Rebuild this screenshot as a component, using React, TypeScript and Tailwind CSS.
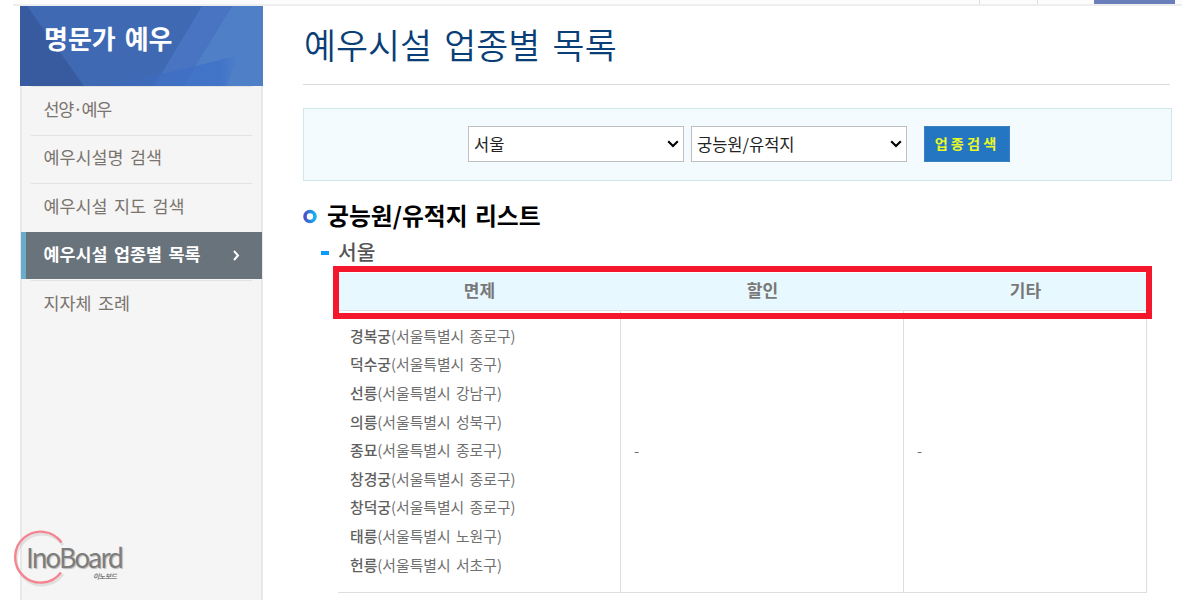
import clsx from 'clsx';

const MENU_ITEMS = [
  { label: '선양·예우', active: false, class_name: 'tracking-[-1.3px]' },
  { label: '예우시설명 검색', active: false },
  { label: '예우시설 지도 검색', active: false },
  { label: '예우시설 업종별 목록', active: true },
  { label: '지자체 조례', active: false }
];

const PLACES = [
  { name: '경복궁', address: '서울특별시 종로구' },
  { name: '덕수궁', address: '서울특별시 중구' },
  { name: '선릉', address: '서울특별시 강남구' },
  { name: '의릉', address: '서울특별시 성북구' },
  { name: '종묘', address: '서울특별시 종로구' },
  { name: '창경궁', address: '서울특별시 종로구' },
  { name: '창덕궁', address: '서울특별시 종로구' },
  { name: '태릉', address: '서울특별시 노원구' },
  { name: '헌릉', address: '서울특별시 서초구' }
];

function TopBar() {
  return (
    <div className="mr-[18px] ml-[13px] flex h-[6px] justify-end border-b-2 border-[#eeeeee] bg-[#fcfcfc]">
      <div className="w-[58px] border-l border-[#dddddd]" />
      <div className="w-[57px] border-l border-[#dddddd]" />
      <div className="mr-[7px] w-[81px] bg-[#6a7ebc]" />
    </div>
  );
}

function SidebarTitle() {
  return (
    <div className="relative h-20 overflow-hidden bg-[#4069b3]">
      <svg className="absolute inset-0" width="243" height="80" viewBox="0 0 243 80">
        <defs>
          <linearGradient id="wave" x1="0" y1="0" x2="1" y2="0">
            <stop offset="0" stopColor="#3966b8" stopOpacity="0.3" />
            <stop offset="0.7" stopColor="#3d6fc7" />
            <stop offset="0.88" stopColor="#3d70c8" />
            <stop offset="1" stopColor="#4d80c9" />
          </linearGradient>
        </defs>
        <path d="M0 0H7L64 80H0Z" fill="#385b9f" />
        <path d="M182 0H212L163 80H134Z" fill="#4874c1" />
        <path d="M212 0H243V80H163Z" fill="#4e7fc7" />
        <path d="M72 80Q130 73 218 49L207 80Z" fill="url(#wave)" opacity="0.75" />
      </svg>
      <h2 className="relative pt-[13px] pl-6 text-[26px] leading-[38px] font-bold text-white [word-spacing:3px]">
        명문가 예우
      </h2>
    </div>
  );
}

function Sidebar() {
  return (
    <aside className="ml-5 flex w-[243px] shrink-0 flex-col bg-[#f5f5f5]">
      <SidebarTitle />
      <ul className="flex-1 border-x-2 border-[#e8e8e8] text-[17.4px] [word-spacing:2.5px]">
        {MENU_ITEMS.map((item) => (
          <li key={item.label} className={clsx('h-[48.5px]', item.class_name)}>
            {item.active ? (
              <a className="-mx-px flex h-[47px] items-center justify-between border-l-[5px] border-[#6aaccb] bg-[#69737c] pr-[22px] pb-[2px] pl-[17.5px] font-bold text-white">
                {item.label}
                <svg className="mt-[2px]" width="7" height="11" viewBox="0 0 7 11" fill="none" stroke="white" strokeWidth="2">
                  <path d="M1 1L5 5.5L1 10" />
                </svg>
              </a>
            ) : (
              <a className="mx-[9px] flex h-full items-center border-t border-[#e2e2e2] pb-[4px] pl-[12.6px] text-[#7a746e]">
                {item.label}
              </a>
            )}
          </li>
        ))}
      </ul>
    </aside>
  );
}

function Select({ value, class_name }: { value: string; class_name?: string }) {
  return (
    <div className={clsx('relative h-9', class_name)}>
      <select className="h-full w-full appearance-none border border-[#bfbfbf] bg-white pt-[2px] pl-[5px] text-[16.5px] text-[#222222]">
        <option>{value}</option>
      </select>
      <svg
        className="pointer-events-none absolute top-[14px] right-[5px]"
        width="12"
        height="8"
        viewBox="0 0 12 8"
        fill="none"
        stroke="black"
        strokeWidth="2.1"
      >
        <path d="M1.2 1.2L6 6L10.8 1.2" />
      </svg>
    </div>
  );
}

function SearchBox() {
  return (
    <div className="mt-[23px] flex h-[73px] w-[869px] items-center border border-[#cfe9ea] bg-[#f3fbfe] pb-[2px] pl-[164px]">
      <Select value="서울" class_name="w-[216px]" />
      <Select value="궁능원/유적지" class_name="ml-[7px] w-[216px]" />
      <button className="ml-[17px] h-9 w-[86px] border border-[#3c80c0] bg-[#2476c3] text-[14.2px] font-bold tracking-[3.1px] text-[#e9f928]">
        업종검색
      </button>
    </div>
  );
}

function FacilityTable() {
  return (
    <div className="relative mt-[7px] ml-[35px] w-[809px]">
      <table className="w-full table-fixed border-separate border-spacing-0">
        <colgroup>
          <col className="w-[283px]" />
          <col className="w-[283px]" />
          <col className="w-[243px]" />
        </colgroup>
        <thead>
          <tr className="h-[38px] bg-[#e8f8ff] text-[17px] text-[#787878]">
            <th className="border-b border-[#d9e2e6] pb-[4px] font-bold">면제</th>
            <th className="border-b border-[#d9e2e6] pb-[4px] font-bold">할인</th>
            <th className="border-b border-[#d9e2e6] pb-[4px] font-bold">기타</th>
          </tr>
        </thead>
        <tbody>
          <tr className="h-[282px] text-[14.85px] text-[#707070]">
            <td className="border-r border-b border-[#dedede] pb-[2px] pl-3">
              <ul className="leading-[28.65px] [word-spacing:2px]">
                {PLACES.map((place) => (
                  <li key={place.name}>
                    <strong className="font-medium text-[#606060]">{place.name}</strong>({place.address})
                  </li>
                ))}
              </ul>
            </td>
            <td className="border-r border-b border-[#dedede] pl-[13px]">-</td>
            <td className="border-r border-b border-[#dedede] pl-[13px]">-</td>
          </tr>
        </tbody>
      </table>
      <div className="absolute -top-[7px] -left-[5px] h-[53px] w-[819px] border-[6px] border-[#f5182d]" />
    </div>
  );
}

function Watermark() {
  return (
    <div className="absolute top-[528px] left-[10px] h-16 w-32 text-[#7d7d7d]">
      <svg className="absolute inset-0" width="128" height="64" fill="none">
        <path d="M53 17A25.5 25.5 0 1 0 53 46" stroke="#bbbbbb" strokeOpacity="0.35" strokeWidth="3" />
        <path d="M51.5 14.5A25.5 25.5 0 1 0 51 44.5" stroke="#f58491" strokeWidth="2.4" />
      </svg>
      <div className="relative flex w-[98px] flex-col pt-[18px] pl-4">
        <span className="text-[26.5px] leading-[22px] tracking-[-2.3px] [text-shadow:1px_1px_1px_#bbbbbb]">
          InoBoard
        </span>
        <span className="mt-[4px] ml-[67px] text-[7px] leading-[8px] font-bold tracking-[-0.6px] whitespace-nowrap italic">
          이노보드
        </span>
      </div>
    </div>
  );
}

function App() {
  return (
    <div className="relative flex h-[600px] w-[1200px] flex-col overflow-hidden bg-white font-['Noto_Sans_CJK_KR',sans-serif]">
      <TopBar />
      <div className="flex flex-1">
        <Sidebar />
        <main className="ml-10 w-[868px]">
          <h1 className="h-[79px] w-[867px] border-b border-[#d8dcdd] pt-[12px] pl-[1px] text-[34.8px] leading-[52px] font-[350] text-[#093e77] [word-spacing:4.5px]">
            예우시설 업종별 목록
          </h1>
          <SearchBox />
          <h3 className="mt-[16px] flex h-9 items-center text-[23.8px] font-bold text-black [word-spacing:2px]">
            <svg className="mt-[2px] mr-[9px]" width="15" height="15" viewBox="0 0 15 15" fill="none">
              <defs>
                <linearGradient id="ring">
                  <stop offset="0" stopColor="#4b50c4" />
                  <stop offset="1" stopColor="#12b4f5" />
                </linearGradient>
              </defs>
              <circle cx="7" cy="7.5" r="5" stroke="url(#ring)" strokeWidth="3.6" />
            </svg>
            궁능원/유적지 리스트
          </h3>
          <h4 className="flex h-[33px] items-center pt-[4px] pl-[18px] text-[20.3px] font-medium text-[#555555]">
            <span className="mt-[3px] mr-[9px] h-1 w-2 bg-[#0a9cfb]" />
            서울
          </h4>
          <FacilityTable />
        </main>
      </div>
      <Watermark />
    </div>
  );
}

export default App;
